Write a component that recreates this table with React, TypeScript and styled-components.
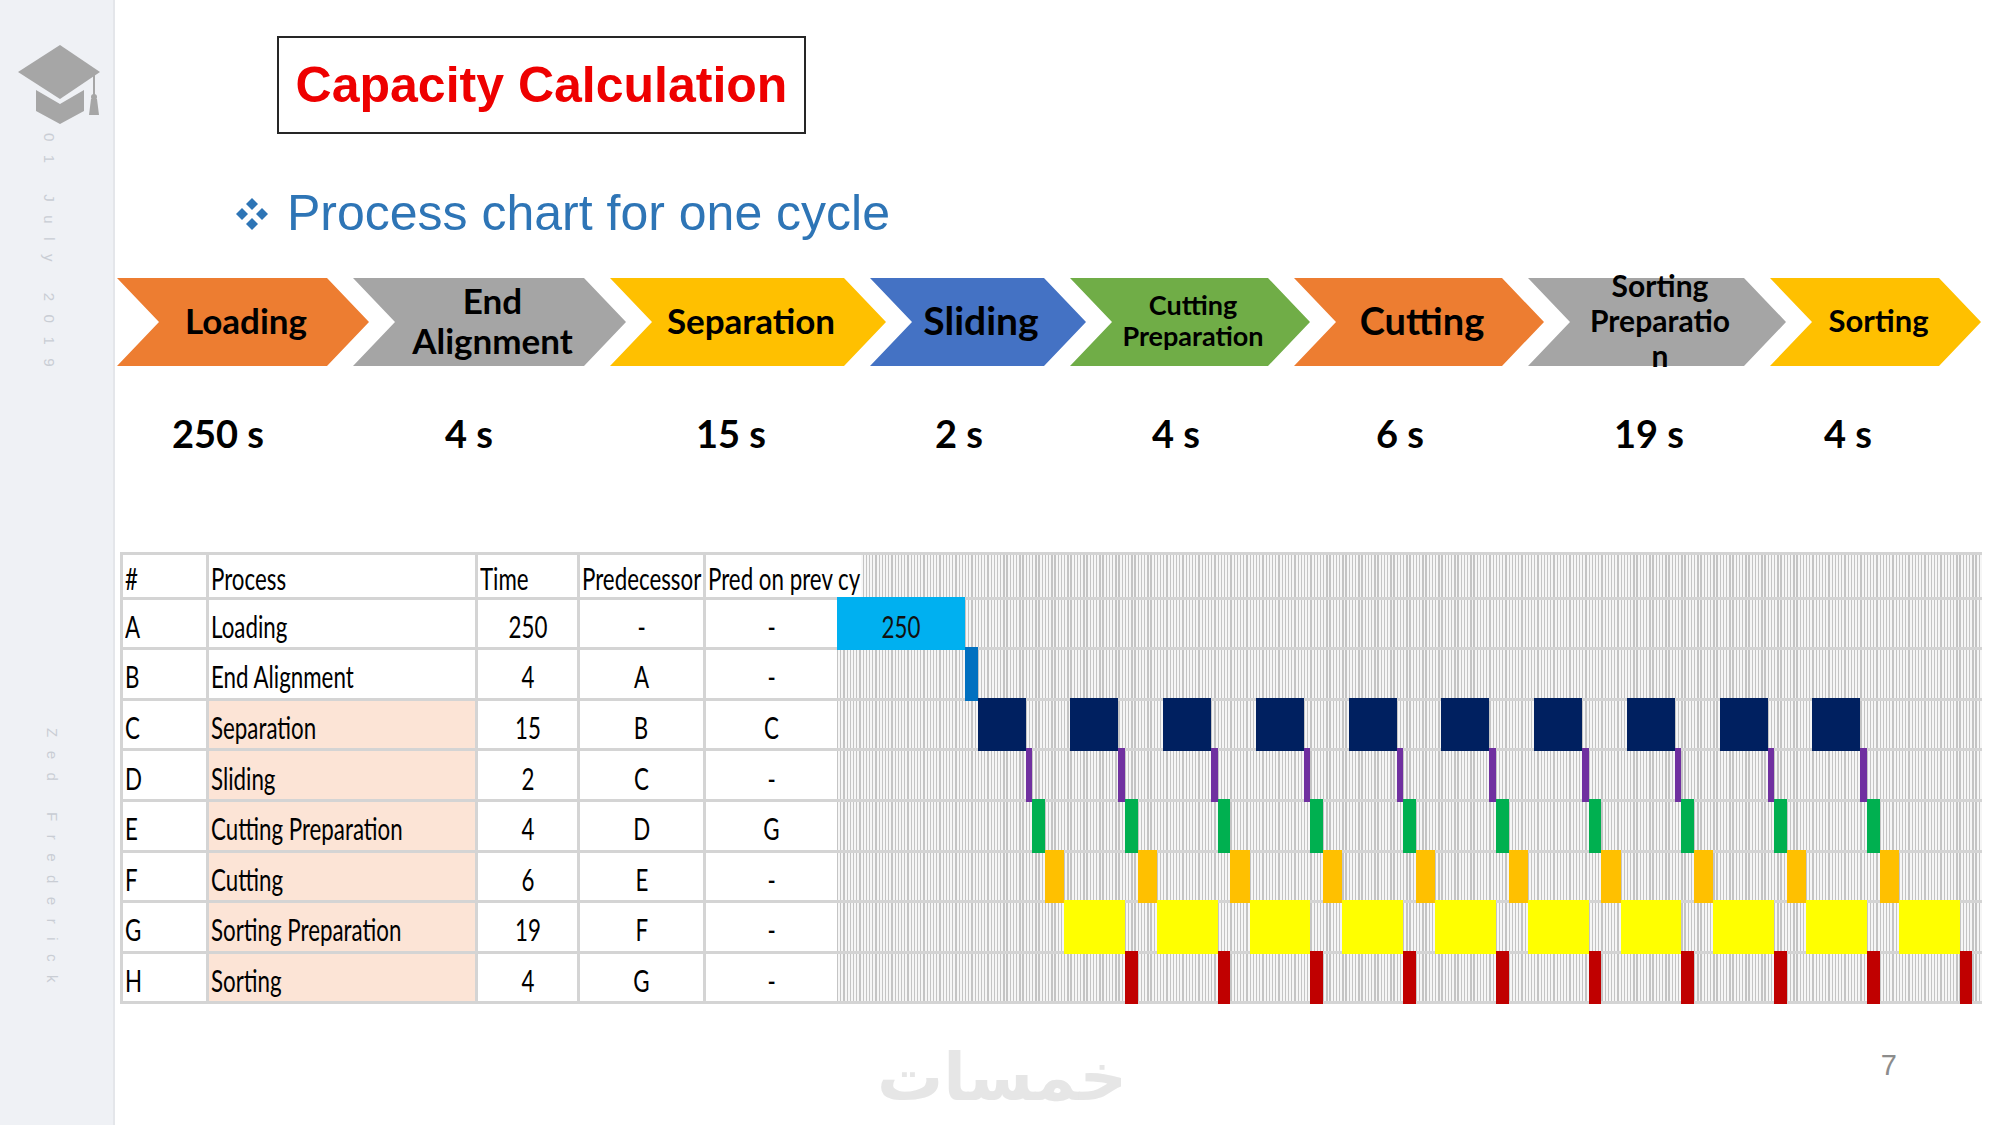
import React from 'react';
import styled, { createGlobalStyle } from 'styled-components';

const GlobalStyle = createGlobalStyle`
    html, body {
        margin: 0;
        padding: 0;
        background: #ffffff;
    }
    body {
        width: 2000px;
        height: 1125px;
        overflow: hidden;
        font-family: 'Liberation Sans', Arial, sans-serif;
    }
    * {
        box-sizing: border-box;
    }
`

const Slide = styled.div`
    display: flex;
    width: 2000px;
    height: 1125px;
    background: #ffffff;
`

const Sidebar = styled.aside`
    width: 115px;
    flex-shrink: 0;
    background: #eff1f5;
    border-right: 2px solid #e4e6ea;
    display: flex;
    flex-direction: column;
    align-items: flex-start;
    padding: 45px 0 0 18px;
`

const SideText = styled.div<{ $indent: number; $gap: number }>`
    writing-mode: vertical-rl;
    font-family: 'Liberation Sans', Arial, sans-serif;
    font-size: 15px;
    letter-spacing: 13.5px;
    color: #c9cdd4;
    white-space: pre;
    margin-left: ${p => p.$indent}px;
    margin-top: ${p => p.$gap}px;
`

const Main = styled.main`
    flex: 1;
    display: flex;
    flex-direction: column;
    align-items: flex-start;
`

const TitleBox = styled.div`
    margin: 36px 0 0 162px;
    width: 529px;
    height: 98px;
    border: 2px solid #262626;
    display: flex;
    align-items: center;
    justify-content: center;
    font: bold 50px 'Liberation Sans', Arial, sans-serif;
    color: #ee0000;
`

const Subtitle = styled.h2`
    margin: 51px 0 0 120px;
    display: flex;
    align-items: center;
    gap: 18px;
    font: normal 50px/57px 'Liberation Sans', Arial, sans-serif;
    color: #2e75b6;
`

const ChevronRow = styled.div`
    display: flex;
    margin: 36px 0 0 2px;
`

const Chevron = styled.div<{ $w: number; $color: string; $fs: number; $lh: number }>`
    position: relative;
    flex-shrink: 0;
    width: ${p => p.$w}px;
    height: 88px;
    display: flex;
    align-items: center;
    justify-content: center;
    padding-left: 6px;
    text-align: center;
    font: 700 ${p => p.$fs}px/${p => p.$lh}px 'Lato', sans-serif;
    color: #000000;
    white-space: nowrap;

    & + & {
        margin-left: -16px;
    }

    &::before {
        content: '';
        position: absolute;
        inset: 0;
        background: ${p => p.$color};
        clip-path: polygon(0 0, calc(100% - 42px) 0, 100% 50%, calc(100% - 42px) 100%, 0 100%, 42px 50%);
    }
`

const ChevronLabel = styled.span`
    position: relative;
    top: -2px;
`

const TimesRow = styled.div`
    display: flex;
    margin: 45px 0 0 3px;
`

const TimeCell = styled.div<{ $w: number }>`
    width: ${p => p.$w}px;
    text-align: center;
    font: 700 38px/1.2 'Lato', sans-serif;
    color: #000000;
`

const Table = styled.div`
    margin: 95px 0 0 5px;
    border-top: 3px solid #d4d4d4;
    border-left: 3px solid #d4d4d4;
    display: flex;
    flex-direction: column;
`

const Row = styled.div<{ $h: number }>`
    display: flex;
    height: ${p => p.$h}px;
`

const Cell = styled.div<{ $w: number; $center?: boolean; $fill?: string; $open?: boolean }>`
    width: ${p => p.$w}px;
    flex-shrink: 0;
    border-bottom: 3px solid #d4d4d4;
    border-right: ${p => (p.$open ? 'none' : '3px solid #d4d4d4')};
    background: ${p => p.$fill ?? '#ffffff'};
    display: flex;
    align-items: stretch;
    justify-content: ${p => (p.$center ? 'center' : 'flex-start')};
    padding-left: ${p => (p.$center ? 0 : 2)}px;
    font: 31px 'Lato', sans-serif;
    color: #000000;
    white-space: nowrap;
`

const Squeeze = styled.span<{ $center?: boolean; $cover?: boolean }>`
    display: inline-flex;
    align-items: center;
    padding-top: 5px;
    transform: scaleX(0.72);
    transform-origin: ${p => (p.$center ? 'center' : 'left')};
    position: relative;
    z-index: 1;
    padding-right: ${p => (p.$cover ? 2 : 0)}px;
    background: ${p => (p.$cover ? '#ffffff' : 'transparent')};
`

const Track = styled.div`
    width: 1145px;
    flex-shrink: 0;
    display: grid;
    grid-template-columns: repeat(358, minmax(0, 1fr));
    border-bottom: 3px solid #d4d4d4;
    background: repeating-linear-gradient(90deg, #c4c4c4 0 1.3px, #f6f6f6 1.3px 3.198px);
`

const Bar = styled.div<{ $start: number; $span: number; $color: string }>`
    grid-row: 1;
    grid-column: ${p => p.$start} / span ${p => p.$span};
    margin: -3px 0;
    background: ${p => p.$color};
    display: flex;
    align-items: center;
    justify-content: center;
    font: 31px 'Lato', sans-serif;
    color: #111111;
`

const Footer = styled.footer`
    align-self: stretch;
    display: flex;
    align-items: flex-start;
`

const Watermark = styled.div`
    margin: 34px 0 0 762px;
    font: bold 66px/1.2 'DejaVu Sans', sans-serif;
    color: #e6e6e6;
    direction: rtl;
`

const PageNumber = styled.div`
    margin: 47px 103px 0 auto;
    font: 29px/1 'Liberation Sans', Arial, sans-serif;
    color: #8c8c8c;
`

const CapIcon = () => (
    <svg width="82" height="80" viewBox="0 0 82 80">
        <polygon points="42,0 82,27 42,54 0,27" fill="#a6a6a6" />
        <polygon points="18,45 42,59 66,45 66,66 42,79 18,66" fill="#a6a6a6" />
        <line x1="76" y1="28" x2="76" y2="52" stroke="#a6a6a6" strokeWidth="2" />
        <circle cx="76" cy="52" r="3" fill="#a6a6a6" />
        <polygon points="73,54 79,54 81,70 71,70" fill="#a6a6a6" />
    </svg>
)

const DiamondMark = () => (
    <svg width="34" height="34" viewBox="0 0 34 34">
        <polygon points="17,1 23,7 17,13 11,7" fill="#2e75b6" />
        <polygon points="7,11 13,17 7,23 1,17" fill="#2e75b6" />
        <polygon points="27,11 33,17 27,23 21,17" fill="#2e75b6" />
        <polygon points="17,21 23,27 17,33 11,27" fill="#2e75b6" />
    </svg>
)

const steps = [
    { lines: ['Loading'], color: '#ed7d31', w: 252, fs: 35, lh: 40 },
    { lines: ['End', 'Alignment'], color: '#a5a5a5', w: 273, fs: 35, lh: 40 },
    { lines: ['Separation'], color: '#ffc000', w: 276, fs: 35, lh: 40 },
    { lines: ['Sliding'], color: '#4472c4', w: 216, fs: 39, lh: 44 },
    { lines: ['Cutting', 'Preparation'], color: '#70ad47', w: 240, fs: 27, lh: 31 },
    { lines: ['Cutting'], color: '#ed7d31', w: 250, fs: 38, lh: 44 },
    { lines: ['Sorting', 'Preparatio', 'n'], color: '#a5a5a5', w: 258, fs: 30, lh: 35 },
    { lines: ['Sorting'], color: '#ffc000', w: 211, fs: 31, lh: 36 },
]

const times = [
    { label: '250 s', w: 200 },
    { label: '4 s', w: 302 },
    { label: '15 s', w: 222 },
    { label: '2 s', w: 234 },
    { label: '4 s', w: 200 },
    { label: '6 s', w: 248 },
    { label: '19 s', w: 250 },
    { label: '4 s', w: 148 },
]

const rows = [
    { id: 'A', name: 'Loading', time: '250', pred: '-', prev: '-', fill: false },
    { id: 'B', name: 'End Alignment', time: '4', pred: 'A', prev: '-', fill: false },
    { id: 'C', name: 'Separation', time: '15', pred: 'B', prev: 'C', fill: true },
    { id: 'D', name: 'Sliding', time: '2', pred: 'C', prev: '-', fill: true },
    { id: 'E', name: 'Cutting Preparation', time: '4', pred: 'D', prev: 'G', fill: true },
    { id: 'F', name: 'Cutting', time: '6', pred: 'E', prev: '-', fill: true },
    { id: 'G', name: 'Sorting Preparation', time: '19', pred: 'F', prev: '-', fill: true },
    { id: 'H', name: 'Sorting', time: '4', pred: 'G', prev: '-', fill: true },
]

// one grid column per second; the loading block is squeezed into 40 columns
const toCol = (t: number) => t - 209
const CYCLE = 29
const cycles = Array.from({ length: 10 }, (_, k) => 254 + k * CYCLE)

const phases: { [id: string]: { offset: number; span: number; color: string } } = {
    C: { offset: 0, span: 15, color: '#002060' },
    D: { offset: 15, span: 2, color: '#7030a0' },
    E: { offset: 17, span: 4, color: '#00b050' },
    F: { offset: 21, span: 6, color: '#ffc000' },
    G: { offset: 27, span: 19, color: '#ffff00' },
    H: { offset: 46, span: 4, color: '#c00000' },
}

const barsFor = (id: string) => {
    if (id === 'A') return [{ start: 1, span: 40, color: '#00b0f0', label: '250' }]
    if (id === 'B') return [{ start: toCol(250), span: 4, color: '#0070c0', label: '' }]
    const ph = phases[id]
    return cycles.map(t => ({ start: toCol(t + ph.offset), span: ph.span, color: ph.color, label: '' }))
}

const COLS = [86, 269, 102, 126, 131]

export default function App() {
    return (
        <React.Fragment>
            <GlobalStyle />
            <Slide>
                <Sidebar>
                    <CapIcon />
                    <SideText $indent={23} $gap={8}>01 July 2019</SideText>
                    <SideText $indent={26} $gap={348}>Zed Frederick</SideText>
                </Sidebar>

                <Main>
                    <TitleBox>Capacity Calculation</TitleBox>

                    <Subtitle>
                        <DiamondMark />
                        Process chart for one cycle
                    </Subtitle>

                    <ChevronRow>
                        {steps.map((s, i) => (
                            <Chevron key={i} $w={s.w} $color={s.color} $fs={s.fs} $lh={s.lh}>
                                <ChevronLabel>
                                    {s.lines.map((l, j) => (
                                        <React.Fragment key={j}>
                                            {j > 0 && <br />}
                                            {l}
                                        </React.Fragment>
                                    ))}
                                </ChevronLabel>
                            </Chevron>
                        ))}
                    </ChevronRow>

                    <TimesRow>
                        {times.map((t, i) => (
                            <TimeCell key={i} $w={t.w}>{t.label}</TimeCell>
                        ))}
                    </TimesRow>

                    <Table>
                        <Row $h={45}>
                            <Cell $w={COLS[0]}><Squeeze>#</Squeeze></Cell>
                            <Cell $w={COLS[1]}><Squeeze>Process</Squeeze></Cell>
                            <Cell $w={COLS[2]}><Squeeze>Time</Squeeze></Cell>
                            <Cell $w={COLS[3]}><Squeeze>Predecessor</Squeeze></Cell>
                            <Cell $w={COLS[4]} $open><Squeeze $cover>Pred on prev cy</Squeeze></Cell>
                            <Track />
                        </Row>
                        {rows.map(r => (
                            <Row key={r.id} $h={50.6}>
                                <Cell $w={COLS[0]}><Squeeze>{r.id}</Squeeze></Cell>
                                <Cell $w={COLS[1]} $fill={r.fill ? '#fce4d6' : undefined}>
                                    <Squeeze>{r.name}</Squeeze>
                                </Cell>
                                <Cell $w={COLS[2]} $center><Squeeze $center>{r.time}</Squeeze></Cell>
                                <Cell $w={COLS[3]} $center><Squeeze $center>{r.pred}</Squeeze></Cell>
                                <Cell $w={COLS[4]} $center $open><Squeeze $center>{r.prev}</Squeeze></Cell>
                                <Track>
                                    {barsFor(r.id).map((b, i) => (
                                        <Bar key={i} $start={b.start} $span={b.span} $color={b.color}>
                                            {b.label && <Squeeze $center>{b.label}</Squeeze>}
                                        </Bar>
                                    ))}
                                </Track>
                            </Row>
                        ))}
                    </Table>

                    <Footer>
                        <Watermark>خمسات</Watermark>
                        <PageNumber>7</PageNumber>
                    </Footer>
                </Main>
            </Slide>
        </React.Fragment>
    )
}
